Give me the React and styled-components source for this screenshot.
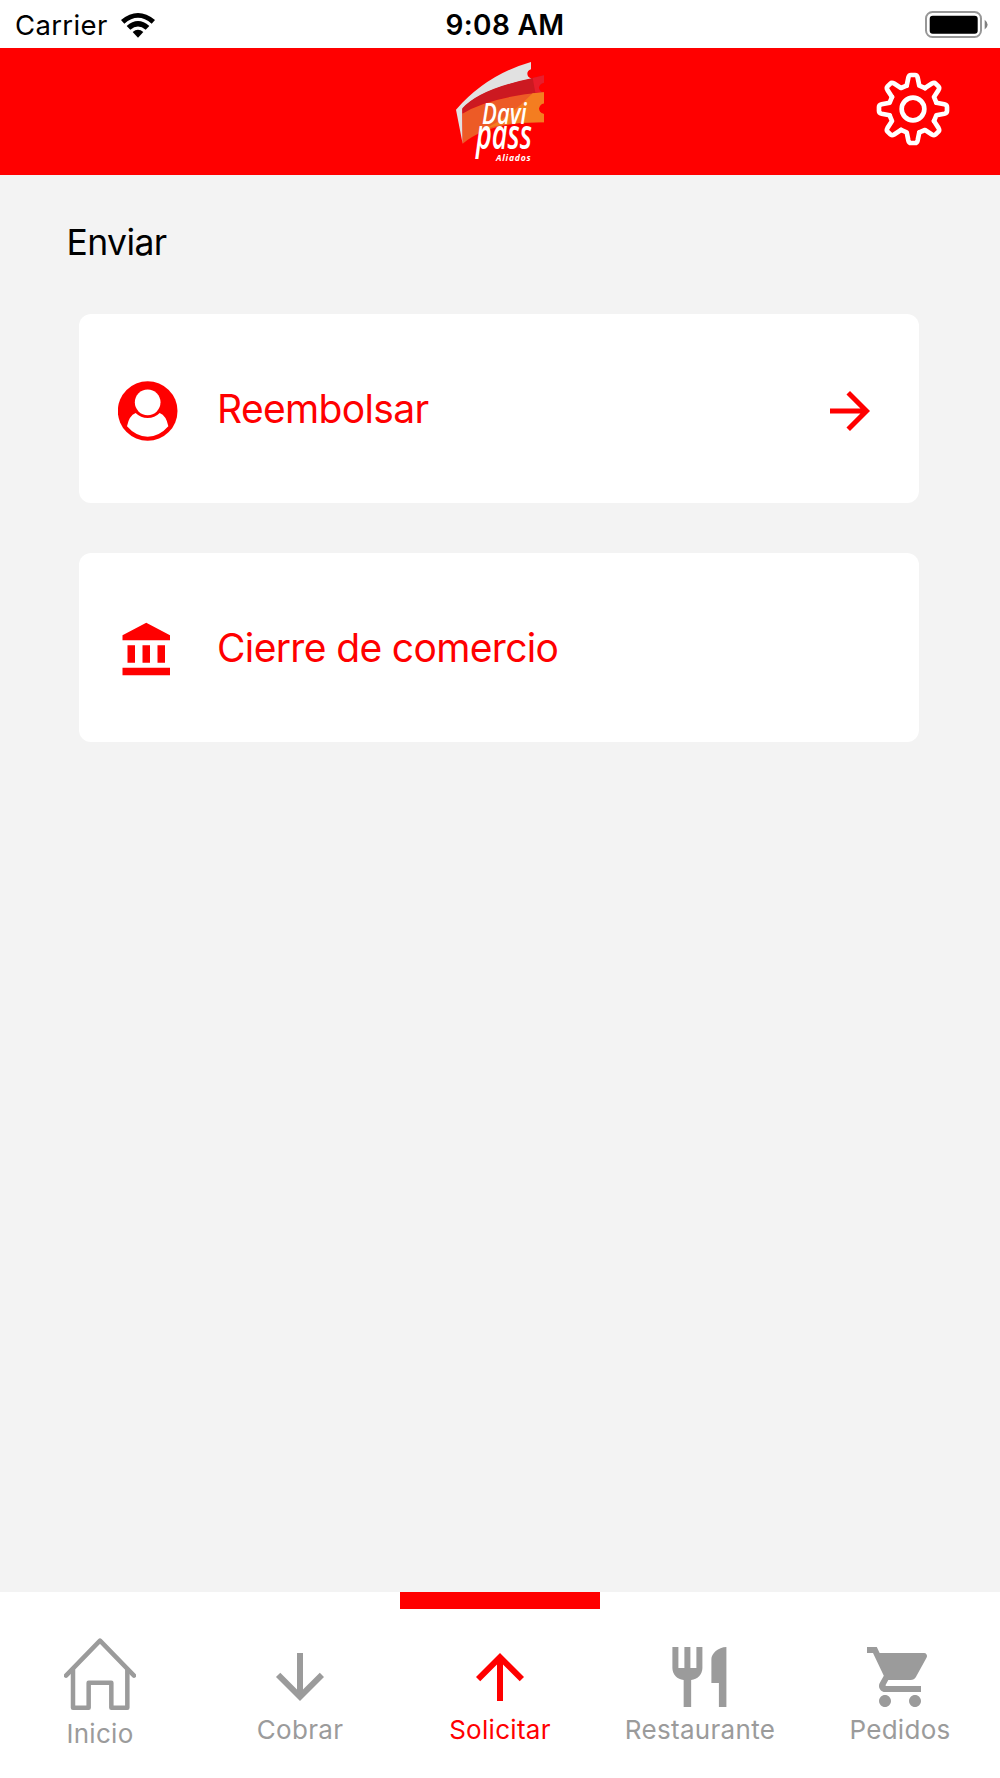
import React from 'react';
import styled, { createGlobalStyle } from 'styled-components';
import {
  MdArrowDownward,
  MdArrowForward,
  MdArrowUpward,
  MdShoppingCart,
} from 'react-icons/md';

const App = () => {
  return (
    <Screen>
      <GlobalStyle />
      <StatusBar>
        <Carrier>
          <span>Carrier</span>
          <WifiIcon />
        </Carrier>
        <Clock>9:08 AM</Clock>
        <BatteryIcon />
      </StatusBar>
      <Header>
        <Logo />
        <SettingsButton aria-label="Ajustes">
          <GearIcon />
        </SettingsButton>
      </Header>
      <Content>
        <Title>Enviar</Title>
        <CardList>
          <Card>
            <UserIcon />
            <CardLabel>Reembolsar</CardLabel>
            <MdArrowForward size={60} />
          </Card>
          <Card>
            <BankIcon />
            <CardLabel>Cierre de comercio</CardLabel>
          </Card>
        </CardList>
      </Content>
      <TabBar>
        <Tab>
          <HomeIcon />
          <TabLabel $offset="4px">Inicio</TabLabel>
        </Tab>
        <Tab>
          <MdArrowDownward size={72} />
          <TabLabel>Cobrar</TabLabel>
        </Tab>
        <Tab $active>
          <MdArrowUpward size={72} />
          <TabLabel>Solicitar</TabLabel>
        </Tab>
        <Tab>
          <RestaurantIcon />
          <TabLabel>Restaurante</TabLabel>
        </Tab>
        <Tab>
          <MdShoppingCart size={72} />
          <TabLabel>Pedidos</TabLabel>
        </Tab>
      </TabBar>
    </Screen>
  );
};

export default App;

const WifiIcon = () => (
  <svg width="34" height="25" viewBox="0 0 102 75">
    <path d="M0 21 Q51 -21 102 21 L92 32 Q51 -3 10 32 Z" />
    <path d="M17 39 Q51 9 85 39 L74 50 Q51 31 28 50 Z" />
    <path d="M35 57 Q51 43 67 57 L51 74 Z" />
  </svg>
);

const BatteryIcon = () => (
  <svg width="63" height="28" viewBox="0 0 63 28">
    <rect x="1" y="1" width="55" height="25" rx="6.5" fill="none" stroke="#979797" strokeWidth="2" />
    <rect x="4.7" y="4.7" width="48" height="18" rx="3" />
    <path d="M59.7 8.7 Q65.6 13.6 59.7 18.6 Z" fill="#808080" />
  </svg>
);

const GearIcon = () => (
  <svg
    width="74"
    height="74"
    viewBox="-111 -111 222 222"
    fill="none"
    stroke="#fff"
    strokeWidth="14"
    strokeLinejoin="round"
    strokeLinecap="round"
  >
    <circle r="34" />
    {[0, 45, 90, 135, 180, 225, 270, 315].map(angle => (
      <path
        key={angle}
        transform={`rotate(${angle})`}
        d="M-19 -70 L-14 -94 Q-12 -102 -6 -102 H6 Q12 -102 14 -94 L19 -70 L36.1 -62.9"
      />
    ))}
  </svg>
);

const UserIcon = () => (
  <svg width="60" height="60" viewBox="0 0 180 180">
    <circle cx="89" cy="90" r="89.5" fill="#f00" />
    <circle cx="89" cy="64" r="38.5" fill="#fff" />
    <path
      d="M53 96 Q33 104 27 136 Q54 167 89 167 Q124 167 151 136 Q145 104 125 96 Q110 111 89 111 Q68 111 53 96 Z"
      fill="#fff"
    />
  </svg>
);

const BankIcon = () => (
  <svg width="60" height="60" viewBox="0.2 -0.1 24 24" fill="currentColor">
    <path d="M4 10v7h3v-7H4zm6 0v7h3v-7h-3zM2 22h19v-3H2v3zm14-12v7h3v-7h-3zm-4.5-9L2 6v2h19V6l-9.5-5z" />
  </svg>
);

const RestaurantIcon = () => (
  <svg width="72" height="72" viewBox="0.2 0 24 24" fill="currentColor">
    <path d="M11 9H9V2H7v7H5V2H3v7c0 2.12 1.66 3.84 3.75 3.97V22h2.5v-9.03C11.34 12.84 13 11.12 13 9V2h-2v7zm5-3v8h2.5v8H21V2c-2.76 0-5 2.24-5 4z" />
  </svg>
);

const HomeIcon = () => (
  <HomeSvg
    width="72"
    height="74"
    viewBox="0 0 216 222"
    fill="none"
    stroke="currentColor"
    strokeWidth="13.5"
    strokeLinejoin="round"
    strokeLinecap="round"
  >
    <path d="M6 116 L108 11 L210 116" />
    <path d="M27 98 V212 H74 V137 H142 V212 H190 V98" />
  </HomeSvg>
);

const Logo = () => (
  <LogoSvg width="94" height="106" viewBox="69 173 282 318">
    <path
      d="M78 328 Q170 223 303 185 V207 C288 211 288 230 305 235 Q145 268 97 326 L98 430 Z"
      fill="#e1e1e1"
    />
    <path d="M97 324 Q150 266 305 234 L342 225 V247 C322 252 322 272 342 277 Q180 290 97 340 Z" fill="#cc1921" />
    <path d="M308 233 L342 225 V247 C322 252 322 272 342 277 H316 Z" fill="#e91d2b" />
    <path
      d="M97 340 Q180 290 342 276 V309 C322 314 322 336 342 341 V366 Q175 364 98 430 Z"
      fill="#ed5b26"
    />
    <path
      d="M308 279 L342 276 V309 C322 314 322 336 342 341 V366 Q230 364 160 388 Q240 350 308 279 Z"
      fill="#f47d20"
    />
    <LogoText x="156" y="372" fontSize="86" textLength="134" fontWeight="600">
      Davi
    </LogoText>
    <LogoText x="138" y="447" fontSize="122" textLength="168" fontWeight="600">
      pass
    </LogoText>
    <LogoText x="198" y="482" fontSize="26" textLength="104" fontWeight="700" lengthAdjust="spacing">
      Aliados
    </LogoText>
  </LogoSvg>
);

const GlobalStyle = createGlobalStyle`
  * {
    box-sizing: border-box;
  }

  body {
    margin: 0;
    background: #f3f3f3;
    font-family: Inter, 'Liberation Sans', sans-serif;
  }
`;

const Screen = styled.div`
  display: flex;
  flex-direction: column;
  width: 1000px;
  height: 1778px;
  background: #f3f3f3;
`;

const StatusBar = styled.div`
  display: grid;
  grid-template-columns: 1fr auto 1fr;
  align-items: center;
  height: 48px;
  padding: 2px 12px 0 15px;
  background: #fff;
  color: #000;
  font-size: 27.5px;
  letter-spacing: 0.35px;

  > svg {
    justify-self: end;
  }
`;

const Carrier = styled.div`
  display: flex;
  align-items: center;
  gap: 13px;
`;

const Clock = styled.div`
  padding-left: 7px;
  font-size: 28px;
  font-weight: 600;
`;

const Header = styled.header`
  display: grid;
  grid-template-columns: 1fr auto 1fr;
  align-items: center;
  height: 127px;
  padding: 0 50px;
  background: #f00;
`;

const LogoSvg = styled.svg`
  grid-column: 2;
  margin-bottom: 1px;
  overflow: visible;
`;

const SettingsButton = styled.button`
  justify-self: end;
  display: flex;
  margin: 0 0 5px;
  padding: 0;
  border: none;
  background: none;
`;

const LogoText = styled.text.attrs(props => ({
  lengthAdjust: props.lengthAdjust || 'spacingAndGlyphs',
}))`
  font-family: 'Open Sans', sans-serif;
  font-style: italic;
  letter-spacing: 0;
  fill: #fff;
`;

const Content = styled.main`
  flex: 1;
  padding: 46px 81px 0 79px;
`;

const Title = styled.h1`
  margin: 0 0 49px -12.5px;
  font-size: 35.5px;
  font-weight: 400;
  line-height: 44px;
  letter-spacing: -0.6px;
  color: #000;
`;

const CardList = styled.div`
  display: flex;
  flex-direction: column;
  gap: 50px;
`;

const Card = styled.div`
  display: flex;
  align-items: center;
  height: 189px;
  padding: 0 39px 0 38.5px;
  border-radius: 12px;
  background: #fff;
  color: #f00;

  > svg {
    margin-top: 5px;
  }
`;

const CardLabel = styled.span`
  flex: 1;
  margin-left: 39.5px;
  font-size: 39px;
  letter-spacing: -0.65px;
`;

const TabBar = styled.nav`
  display: grid;
  grid-template-columns: repeat(5, 1fr);
  height: 186px;
  background: #fff;
`;

const Tab = styled.div`
  display: flex;
  flex-direction: column;
  align-items: center;
  padding-top: 32px;
  border-top: 17px solid ${props => (props.$active ? '#f00' : 'transparent')};
  color: ${props => (props.$active ? '#f00' : '#9b9b9b')};
`;

const HomeSvg = styled.svg`
  margin: -4px 0 2px;
`;

const TabLabel = styled.span`
  margin-top: ${props => props.$offset || '0'};
  font-size: 26px;
  line-height: 34px;
  letter-spacing: 0.3px;
`;
